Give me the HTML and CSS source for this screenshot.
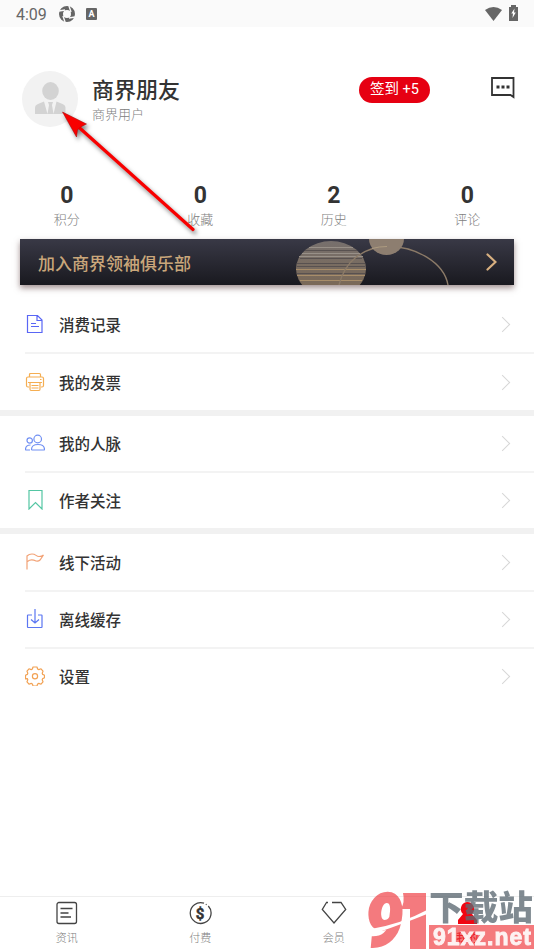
FILE: index.html
```html
<!DOCTYPE html>
<html lang="zh-CN">
<head>
<meta charset="utf-8">
<title>我的</title>
<link rel="stylesheet" href="styles.css">
</head>
<body>
<div class="app">
  <header class="status">
    <span class="time">4:09</span>
    <svg class="st-round" width="16" height="16" viewBox="0 0 16 16"><circle cx="8" cy="8" r="6" fill="none" stroke="#666" stroke-width="4"/><path d="M0 5l6-1M10 0l2 6M16 11l-6 1M6 16l-2-6" stroke="#fafafa" stroke-width="1.400"/></svg>
    <span class="st-a">A</span>
    <span class="grow"></span>
    <svg width="17" height="14" viewBox="0 0 17 14"><path d="M0 3Q8.500-3 17 3L8.500 14Z" fill="#666"/></svg>
    <svg class="battery" width="9" height="16" viewBox="0 0 9 16"><path d="M0 2h2V0h5v2h2v14H0Z" fill="#666"/><path d="M5.500 3.500 2.300 8.500H4L3.500 13 6.800 7.500H5Z" fill="#fff"/></svg>
  </header>

  <section class="profile">
    <svg width="56" height="56" viewBox="0 0 56 56"><circle cx="28" cy="28" r="28" fill="#f2f2f2"/><ellipse cx="28.500" cy="20" rx="8.300" ry="9" fill="#d3d3d3"/><path d="M13 43v-6q0-3 3-4l6-2.500L25.500 43ZM43.500 43v-6q0-3-3-4l-6-2.500L31.500 43ZM26 31h5l-1 3 1.500 9h-6L27 34Z" fill="#d3d3d3"/></svg>
    <div class="who"><div class="name">商界朋友</div><div class="role">商界用户</div></div>
    <div class="sign">签到 +5</div>
    <svg class="msg" width="24" height="22" viewBox="0 0 24 22"><path d="M1 1h21.500v19l-3-2H1Z" fill="none" stroke="#333" stroke-width="1.800"/><path d="M5.500 8.500h3v3h-3zM10.500 8.500h3v3h-3zM15.500 8.500h3v3h-3z" fill="#333"/></svg>
  </section>

  <section class="stats">
    <div><b>0</b><span>积分</span></div>
    <div><b>0</b><span>收藏</span></div>
    <div><b>2</b><span>历史</span></div>
    <div><b>0</b><span>评论</span></div>
  </section>

  <section class="banner">
    <span>加入商界领袖俱乐部</span>
    <svg class="deco" width="154" height="46" viewBox="0 0 154 46">
      <defs><linearGradient id="g" x1="0" y1="0" x2="0" y2="1"><stop offset="0" stop-color="#77706d"/><stop offset="1" stop-color="#7b6752"/></linearGradient></defs>
      <ellipse cx="35" cy="30" rx="35" ry="28" fill="url(#g)"/>
      <g fill="none" stroke-width="1"><path d="M13 8.500h44M6 14.500h58M3 17.500h64" stroke="#989088"/><path d="M9 11.500h52M4 19.500h62M1 24.500h68M1 27.500h68M1 34.500h68" stroke="#585150"/><path d="M0 30.500h70M1 36.500h68M4 41.500h62" stroke="#a88d69"/></g>
      <path d="M43 46C49 22 67 7.500 93 7.500S148 23 152 46" fill="none" stroke="#8c7b68" stroke-width="1.400"/>
      <path d="M73 0h35a17.500 16 0 0 1-35 0Z" fill="#8d7e70"/><path d="M76 9.500q7-2 15-2" fill="none" stroke="#ad9b80"/>
    </svg>
    <svg width="11" height="18" viewBox="0 0 11 18"><path d="m1.500 1.500 8 7.500-8 7.500" fill="none" stroke="#d8b080" stroke-width="2.200" stroke-linecap="round"/></svg>
  </section>

  <main class="menu">
    <div class="group">
      <div class="row tall line"><svg class="ic" viewBox="0 0 20 20" stroke="#5966f5"><path d="M2.500 1.500h10l4.500 4.500v12.500h-14.500ZM12 1.500V6.500h5M6 9.500h5M6 12.500h8"/></svg><span>消费记录</span><i class="chev"></i></div>
      <div class="row last"><svg class="ic" viewBox="0 0 20 20" stroke="#f5ae52"><path d="M4.500 5V2.500q0-1 1-1h9q1 0 1 1V5M4 15H3q-1.500 0-1.500-1.500v-7Q1.500 5 3 5h14q1.500 0 1.500 1.500v7Q18.500 15 17 15h-1M3 10.500h14M5 11v6q0 1.500 1 1.500h8q1 0 1-1.500v-6M6.500 13.500h7M6.500 16h7M15 7.500h1.500"/></svg><span>我的发票</span><i class="chev"></i></div>
    </div>
    <div class="group">
      <div class="row line"><svg class="ic" viewBox="0 0 20 20" stroke="#7190f3"><circle cx="12.700" cy="6" r="3.800"/><circle cx="4.700" cy="7.500" r="2.700"/><path d="M6.500 16.500q0-5 6.500-5t6.500 5q0 .500-1 .500h-11q-1 0-1-.500ZM5.500 12Q.500 12 .500 16.500q0 .500 1 .500H5"/></svg><span>我的人脉</span><i class="chev"></i></div>
      <div class="row"><svg class="ic" viewBox="0 0 20 20" stroke="#54c6a3"><path d="M4 .500h13v18.500l-6.500-6.500L4 19Z"/></svg><span>作者关注</span><i class="chev"></i></div>
    </div>
    <div class="group">
      <div class="row tall line"><svg class="ic" viewBox="0 0 20 20" stroke="#f2a276"><path d="M2 17.500V4Q4 2 7 2c4 0 4 2.500 7 2.500q3 0 4.500-1.500L15 8q-1.500 1.500-4 1-5-2.500-8.500.500"/></svg><span>线下活动</span><i class="chev"></i></div>
      <div class="row line"><svg class="ic" viewBox="0 0 20 20" stroke="#5b76f2"><path d="M7 6H3q-.500 0-.500.500V18q0 .500.500.500h13.500q.500 0 .500-.500V6.500q0-.500-.500-.500H13M10 0v14M6 10.500l4 3.500 4-3.500"/></svg><span>离线缓存</span><i class="chev"></i></div>
      <div class="row"><svg class="ic" viewBox="0 0 20 20" stroke="#f2a254" stroke-linejoin="round"><path d="M8 1h4l.6 2 1.200.6L16 2.800l2 2.400-.8 2 .5 1.200 1.800.8v2.600l-1.800.8-.5 1.200.8 2-2 2.400-2.200-.8-1.200.6-.6 2H8l-.6-2-1.200-.6-2.200.8-2-2.400.8-2-.5-1.200L.5 12.800V9.200l1.800-.8.500-1.200-.8-2 2-2.400 2.200.8L7.400 3Z"/><circle cx="10" cy="10.300" r="2.600"/></svg><span>设置</span><i class="chev"></i></div>
    </div>
  </main>

  <nav class="tabs">
    <div><svg viewBox="0 0 26 24"><rect x="3" y="1.500" width="19.500" height="21" rx="2"/><path d="M6.500 7.500h12M6.500 12h8M6.500 16h10.500"/></svg><span>资讯</span></div>
    <div><svg viewBox="0 0 26 24"><path d="M17 2.200A10.400 10.400 0 1 0 21.300 5M18.800 3.200l.8.500"/><text x="13" y="17.500">$</text></svg><span>付费</span></div>
    <div><svg viewBox="0 0 26 24"><path d="M5.500 1.500 1.300 8.500 13 22 24.700 8.500 20 1.500H11M5 1.500h2"/></svg><span>会员</span></div>
    <div class="active"><svg viewBox="0 0 26 24"><path d="M13 1a7 7 0 0 0-4 12l-5 6v4h19v-4l-5-6A7 7 0 0 0 13 1Z"/></svg><span>我的</span></div>
  </nav>

  <svg class="pointer" width="160" height="145" viewBox="0 0 160 145"><path d="M22 18.500 137 121.500" stroke="#f80000" stroke-width="3.200" stroke-linecap="round"/><path d="m6.500 4 24 12-6 3-3 3-1 7Z" fill="#f80000" stroke="#a40000" stroke-width=".500"/></svg>

  <svg class="brand" width="171" height="62" viewBox="0 0 171 62">
    <g class="nine"><text class="logo" x="2" y="58" textLength="38" lengthAdjust="spacingAndGlyphs">9</text><path d="M40 5h23v56H47V21h-9q4-7 2-16Z"/></g>
    <path d="M8 41Q38 36 64 22v4Q42 35 16 44Z" fill="#fff"/>
    <text class="site" x="66" y="32" textLength="104" lengthAdjust="spacingAndGlyphs">下载站</text>
    <rect x="66" y="37" width="105" height="24" fill="#ee3338" opacity=".65"/>
    <text class="domain" x="70" y="57" textLength="98" lengthAdjust="spacing">91xz.net</text>
  </svg>
</div>
</body>
</html>
```
FILE: styles.css
```css
* { box-sizing: border-box; }
body { margin: 0; background: #fff; font-family: Roboto, "Noto Sans CJK SC", sans-serif; color: #333; }
svg { display: block; flex: none; }
.app { position: relative; width: 534px; height: 950px; overflow: hidden; display: flex; flex-direction: column; }
.status { height: 27px; background: #fafafa; display: flex; align-items: center; padding: 0 16px 0 16px; flex: none; }
.time { font-size: 16px; line-height: 27px; color: #666; width: 43px; padding-top: 1px; }
.st-a { width: 11px; height: 12px; margin-left: 11px; background: #666; color: #fff; font-size: 9px; font-weight: 700; line-height: 12px; text-align: center; border-radius: 1px; }
.grow { flex: 1; }
.battery { margin-left: 7px; margin-top: -2px; }
.profile { height: 149px; display: flex; align-items: flex-start; padding: 44px 19px 0 22px; flex: none; }
.who { margin-left: 14px; width: 267px; }
.name { font-size: 22px; font-weight: 500; line-height: 32px; margin-top: 4px; }
.role { font-size: 13px; line-height: 18px; margin-top: -1px; color: #808080; font-weight: 300; }
.sign { width: 71px; height: 26px; margin-top: 6px; border-radius: 13px; background: #e60012; color: #fff; font-size: 14.5px; line-height: 26px; text-align: center; }
.msg { margin: 6px 0 0 61px; }
.stats { height: 63px; display: flex; flex: none; }
.stats div { width: 133.5px; text-align: center; padding-top: 6px; }
.stats b { display: block; font-size: 23px; line-height: 28px; font-weight: 700; }
.stats span { display: block; font-size: 13px; line-height: 19px; color: #808080; font-weight: 300; }
.banner { height: 46px; margin: 0 20px; padding: 0 17px 0 18px; display: flex; align-items: center; background: linear-gradient(#393946, #19191f); box-shadow: 0 3px 6px rgba(70, 35, 35, .5); color: #caa77b; font-size: 17px; font-weight: 500; flex: none; }
.deco { margin: 0 36px 0 auto; }
.menu { padding-top: 11px; flex: 1; }
.group + .group { border-top: 6px solid #f1f1f1; }
.row { height: 55px; display: flex; align-items: center; margin-left: 25px; padding-right: 26px; font-size: 15.5px; font-weight: 500; }
.row.line { height: 57px; border-bottom: 2px solid #f3f3f3; }
.row.tall { height: 58px; }
.row.last { height: 56px; }
.row span { margin: -1px 0 0 14px; flex: 1; }
.ic { width: 20px; height: 20px; margin-top: -1px; fill: none; stroke-width: 1.2; }
.chev { width: 11px; height: 11px; border: solid #d6d6d6; border-width: 1.4px 1.4px 0 0; transform: rotate(45deg); }
.tabs { height: 54px; border-top: 1px solid #eee; display: flex; flex: none; }
.tabs div { width: 133.5px; display: flex; flex-direction: column; align-items: center; padding-top: 4px; color: #808080; font-size: 11px; font-weight: 300; }
.tabs svg { width: 26px; height: 24px; fill: none; stroke: #444; stroke-width: 1.3; }
.tabs text { font: 700 15px Roboto, sans-serif; text-anchor: middle; fill: #333; stroke: #333; stroke-width: .5px; }
.tabs span { line-height: 16px; margin-top: 6px; }
.tabs .active { color: #e60012; font-weight: 500; }
.tabs .active svg { fill: #f00612; stroke: none; }
.pointer { position: absolute; left: 56px; top: 108px; filter: drop-shadow(2px 3px 2px rgba(0, 0, 0, .5)); }
.brand { position: absolute; left: 363px; top: 888px; }
.nine { opacity: .62; fill: #ee2a30; }
.logo { font: italic 900 73px Roboto, sans-serif; stroke: #ee2a30; stroke-width: 2px; }
.site { font: 900 34px "Noto Sans CJK SC", sans-serif; fill: #5d6a73; opacity: .78; }
.domain { font: 700 23px "Liberation Sans", sans-serif; fill: #fff; stroke: #fff; stroke-width: .9px; opacity: .9; }
```
